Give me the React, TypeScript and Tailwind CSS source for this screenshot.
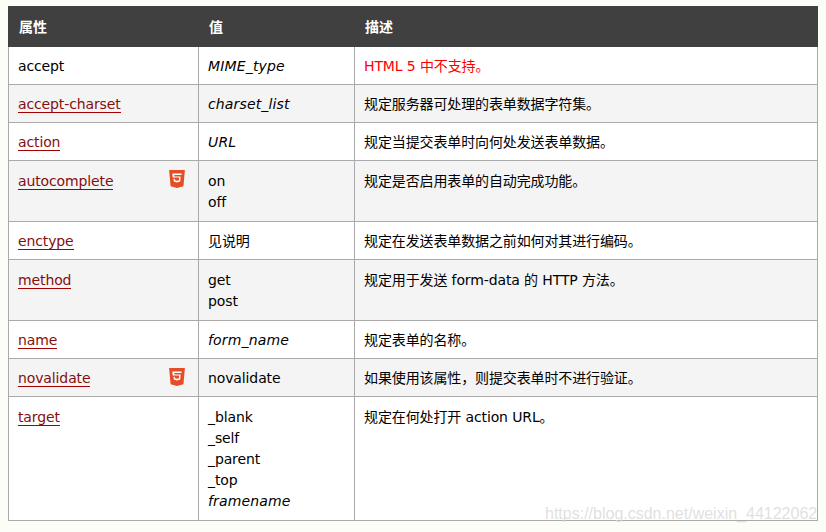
const font = "font-['DejaVu_Sans','Noto_Sans_CJK_SC',sans-serif]";

interface Row {
  name: string;
  link?: boolean;
  html5?: boolean;
  values: { text: string; italic?: boolean }[];
  desc: string;
  red?: boolean;
}

const rows: Row[] = [
  { name: "accept", values: [{ text: "MIME_type", italic: true }], desc: "HTML 5 中不支持。", red: true },
  { name: "accept-charset", link: true, values: [{ text: "charset_list", italic: true }], desc: "规定服务器可处理的表单数据字符集。" },
  { name: "action", link: true, values: [{ text: "URL", italic: true }], desc: "规定当提交表单时向何处发送表单数据。" },
  { name: "autocomplete", link: true, html5: true, values: [{ text: "on" }, { text: "off" }], desc: "规定是否启用表单的自动完成功能。" },
  { name: "enctype", link: true, values: [{ text: "见说明" }], desc: "规定在发送表单数据之前如何对其进行编码。" },
  { name: "method", link: true, values: [{ text: "get" }, { text: "post" }], desc: "规定用于发送 form-data 的 HTTP 方法。" },
  { name: "name", link: true, values: [{ text: "form_name", italic: true }], desc: "规定表单的名称。" },
  { name: "novalidate", link: true, html5: true, values: [{ text: "novalidate" }], desc: "如果使用该属性，则提交表单时不进行验证。" },
  {
    name: "target",
    link: true,
    values: [{ text: "_blank" }, { text: "_self" }, { text: "_parent" }, { text: "_top" }, { text: "framename", italic: true }],
    desc: "规定在何处打开 action URL。",
  },
];

function Html5Icon() {
  return (
    <svg viewBox="0 0 24 24" className="absolute right-[12px] top-[9px] h-[18px] w-[18px]">
      <path fill="#e44d26" d="M1.5 0h21l-1.91 21.56L11.98 24l-8.56-2.44L1.5 0z" />
      <path
        fill="#fff"
        d="M18.25 4.5H5.75l.5 5.6h8.7l-.3 3.4-2.65.75-2.68-.75-.15-1.9H7.4l.3 3.7 4.3 1.2 4.3-1.2.6-6.8H8.6l-.2-2h9.65l.2-1.999z"
      />
    </svg>
  );
}

export default function App() {
  return (
    <div className={`relative h-[532px] w-[826px] overflow-hidden bg-[#fdfdf8] pl-[8px] pt-[6px] ${font}`}>
      <table className="w-[810px] table-fixed border-collapse text-[14px] leading-[21px] tracking-[-0.12px] text-[#000]">
        <colgroup>
          <col className="w-[190px]" />
          <col className="w-[156px]" />
          <col />
        </colgroup>
        <thead>
          <tr className="h-[40px] bg-[#404040] text-left text-white">
            <th className="border border-[#404040] px-[10px] pt-[1px] align-middle text-[14px] font-bold">属性</th>
            <th className="border border-[#404040] px-[10px] pt-[1px] align-middle text-[14px] font-bold">值</th>
            <th className="border border-[#404040] px-[10px] pt-[1px] align-middle text-[14px] font-bold">描述</th>
          </tr>
        </thead>
        <tbody>
          {rows.map((row, index) => {
            const tall = row.values.length > 1;
            const cell = `border border-[#aaaaaa] px-[9px] align-top ${tall ? "pt-[10px] pb-[8px]" : "pt-[9px] pb-[7px]"}`;
            return (
              <tr key={row.name} className={index % 2 === 1 ? "bg-[#f4f4f4]" : "bg-white"}>
                <td className={`relative ${cell}`}>
                  {row.link ? (
                    <a className="border-b border-[#a40000] text-[#840f0f]">{row.name}</a>
                  ) : (
                    row.name
                  )}
                  {row.html5 ? <Html5Icon /> : null}
                </td>
                <td className={cell}>
                  {row.values.map((value) => (
                    <div key={value.text} className={value.italic ? "italic tracking-[0.15px]" : ""}>
                      {value.text}
                    </div>
                  ))}
                </td>
                <td className={`${cell} ${row.red ? "text-[#ff0000]" : ""}`}>{row.desc}</td>
              </tr>
            );
          })}
        </tbody>
      </table>
      <span className="absolute left-[545px] top-[505px] font-['Liberation_Sans',sans-serif] text-[16px] leading-[18px] text-[#d8d8d8]/80">
        https://blog.csdn.net/weixin_44122062
      </span>
    </div>
  );
}
